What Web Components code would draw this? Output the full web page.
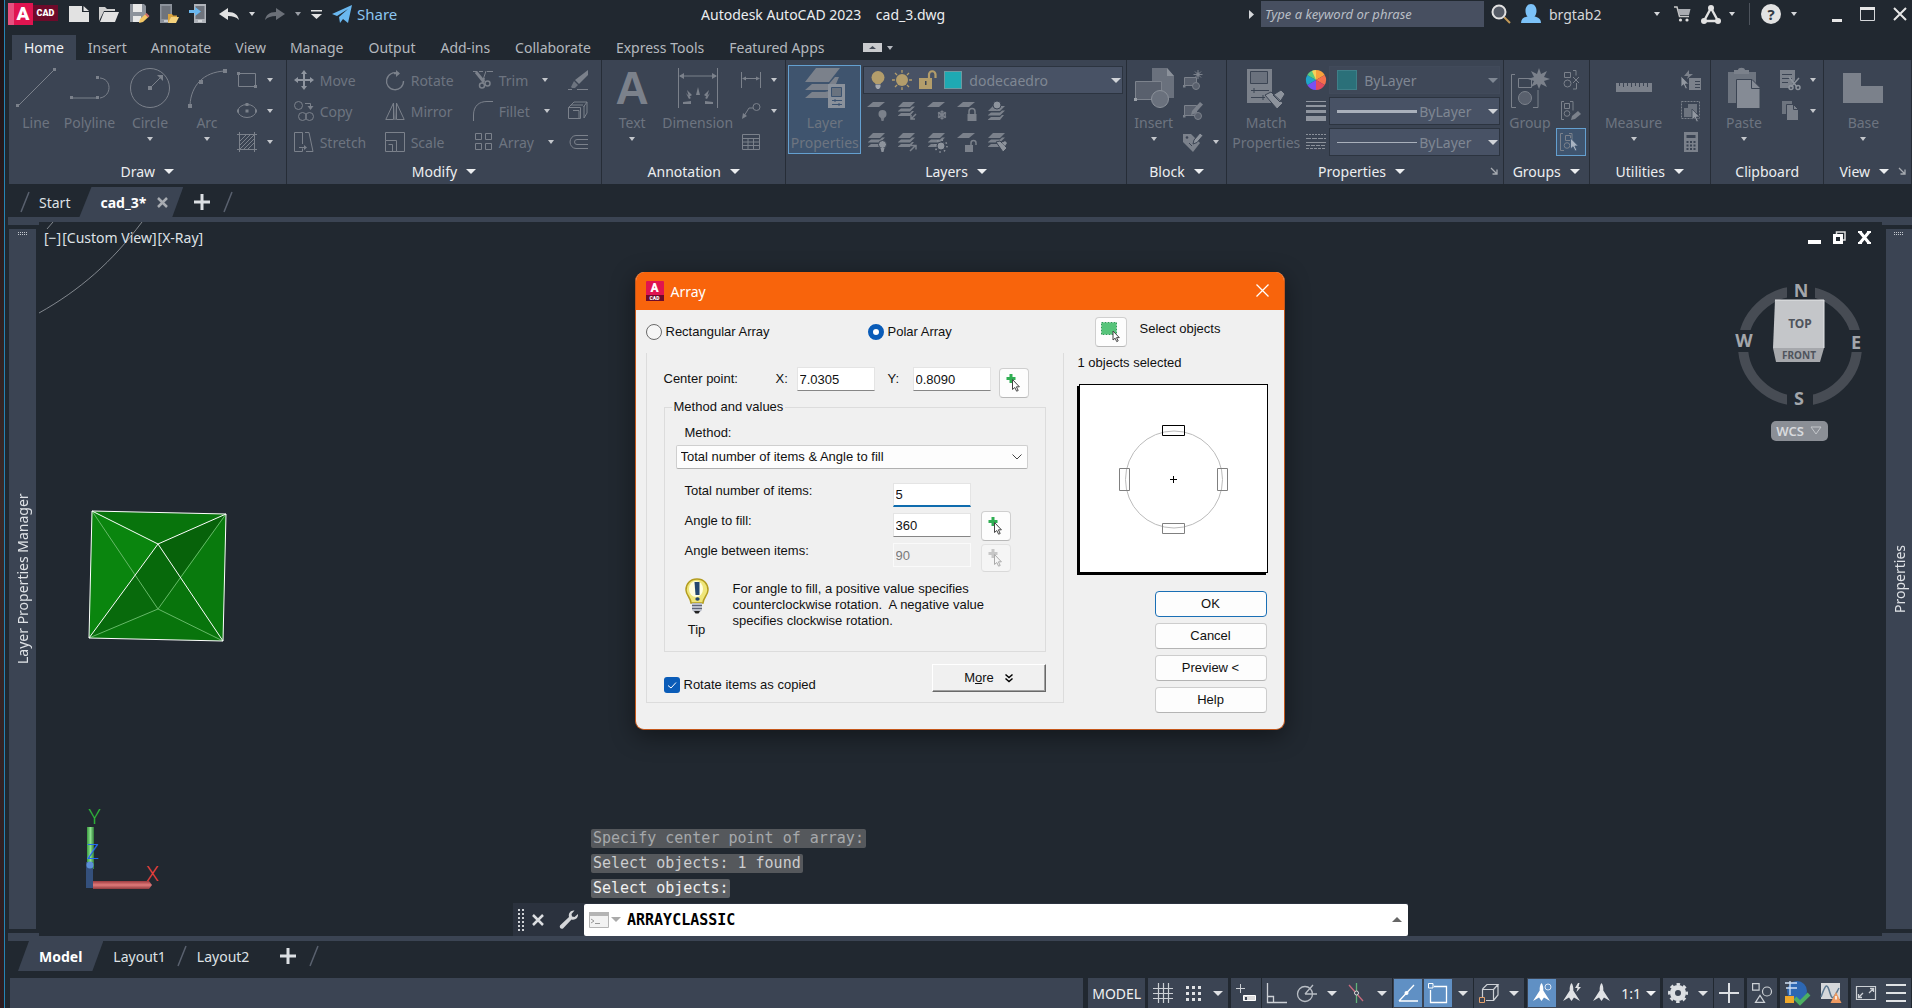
<!DOCTYPE html>
<html lang="en">
<head>
<meta charset="utf-8">
<title>Autodesk AutoCAD 2023 - cad_3.dwg</title>
<style>
  html, body { margin: 0; height: 100%; background: #212830; }
  body { font-family: "Noto Sans", "Open Sans", sans-serif; font-size: 14px; overflow: hidden; }
</style>
</head>
<body>
<cad-app></cad-app>
<script>
const RESET = `
  *, *::before, *::after { box-sizing: border-box; }
  button, input, select { font: inherit; color: inherit; margin: 0; padding: 0; border: 0; background: none; border-radius: 0; }
  button { cursor: default; }
  select { appearance: none; }
  svg { display: block; }
`;

function define(name, css, html, setup) {
  customElements.define(name, class extends HTMLElement {
    constructor() {
      super();
      this.attachShadow({ mode: 'open' });
    }
    connectedCallback() {
      if (this.shadowRoot.childNodes.length) return;
      const body = typeof html === 'function' ? html(this) : html;
      this.shadowRoot.innerHTML = `<style>${RESET}${css}</style>${body}`;
      if (setup) setup(this);
    }
  });
}

/* ---------- icon library: [width, height, markup] ---------- */
const S = (inner, w = 1) => `<g fill="none" stroke="currentColor" stroke-width="${w}">${inner}</g>`;
const F = inner => `<g fill="currentColor">${inner}</g>`;
const sheet = y => `<path d="M6 ${y}h12l-6 5h-12z"/>`;
const stack = F('<path d="M6 1h12l-5 5h-12z"/><path d="M1 10l3-2.500h9l2-2h3l-5 5h-12z"/><path d="M1 14.500l3-2.500h9l2-2h2l-4 5h-12z"/>');
const cursor = (x, y, fill = '#9298a1', stroke = '#3b4453') => `<path transform="translate(${x} ${y})" d="M0 0v11l2.600-2.300 2 4.300 1.800-.8-2-4.200h3.400z" fill="${fill}" stroke="${stroke}" stroke-width=".8"/>`;
const drafter = '<path d="M9.500 0c1.500 2 2 4.500 1.800 7.500L18 18l-6-3.500L9.500 18 7 14.500 1 18 7.700 7.500C7.500 4.500 8 2 9.500 0z"/>';
const ICONS = {
  caret: [6, 4, F('<path d="M0 0h6L3 4z"/>')],
  caretL: [10, 5, F('<path d="M0 0h10L5 5z"/>')],
  caretUp: [10, 5, F('<path d="M0 5h10L5 0z"/>')],
  caretR: [5, 9, F('<path d="M0 0l5 4.500L0 9z"/>')],
  launch: [7, 7, S('<path d="M0 0l6 6M6 1.500V6H1.500" stroke-width="1.300"/>')],
  newf: [20, 16, '<path d="M0 0h13v6h7v10H0z" fill="#e2e2e2"/><path d="M14.500 0L20 5h-5.500z" fill="#e2e2e2"/>'],
  open: [20, 16, '<path d="M0 15V1h6l2 2h8v2H5z" fill="#cfcfcf"/><path d="M5 6h15l-4 10H1z" fill="#e2e2e2"/>'],
  save: [20, 20, '<path d="M1 0h14l2 2v8l-6 8H1z" fill="#8d939c"/><path d="M4 0h9v8H4z" fill="#e8e8e8"/><path d="M4 12h8v6H4z" fill="#e8e8e8"/><path d="M10 19l1-4 6-5.500 3 3-6 5.500z" fill="#f3c766"/><path d="M16 10.500l1.500-1.500 3 3-1.500 1.500z" fill="#c96a6a"/>'],
  saveas: [20, 20, '<path d="M1 0h12v19H1z" fill="#8d939c"/><path d="M2.500 2h9v13h-9z" fill="#6e737c"/><path d="M5 16.500h4v1H5z" fill="#fff"/><path d="M9 10h4l1 1.500h4V13h-6l-2 5H9z" fill="#d9a33f"/><path d="M12 13h8l-3 6H9z" fill="#f5d27c"/>'],
  openweb: [20, 20, '<path d="M5 0h12v19H5z" fill="#b0b4ba"/><path d="M6.500 2h9v13h-9z" fill="#6e737c"/><path d="M9 16.500h4v1H9z" fill="#fff"/><path d="M0 6h6V3l6 4.500-6 4.500V9H0z" fill="#6ab8f0"/>'],
  undo: [20, 14, '<path d="M0 7l9-6v4c7 0 10 3 11 8-3-3-6-4-11-4v4z" fill="#e2e2e2"/>'],
  redo: [20, 14, '<path d="M20 7l-9-6v4C4 5 1 8 0 13c3-3 6-4 11-4v4z" fill="#6b7078"/>'],
  custom: [11, 9, '<path d="M0 0h11v1.500H0zM0 4h11L5.500 9z" fill="#e2e2e2"/>'],
  plane: [20, 18, '<path d="M0 9L20 0l-4 18-5-4-3 4-1-6L16 4 5 11z" fill="#6ab8f0"/>'],
  mag: [20, 20, '<path d="M13 13l6 6" stroke="#c39a58" stroke-width="2"/><circle cx="8" cy="8" r="6.500" fill="#555b66" stroke="#e2e2e2" stroke-width="2"/>'],
  user: [20, 20, '<path d="M0 19c0-4 3-6 6.500-6.500C3 9 4 0 10 0s7 9 3.500 12.500C17 13 20 15 20 19z" fill="#7cc2f8"/>'],
  cart: [17, 17, '<path d="M0 1h3l2.500 9.500H15" fill="none" stroke="#c8c8c8" stroke-width="1.500"/><path d="M4 3h12.500L15 9H5z" fill="#a9acb1"/><circle cx="6.500" cy="14" r="1.600" fill="#ddd"/><circle cx="13" cy="14" r="1.600" fill="#ddd"/>'],
  tri: [20, 19, '<path d="M10 3L3 16h14z" fill="none" stroke="#e2e2e2" stroke-width="2.400"/><circle cx="10" cy="3" r="3" fill="#e2e2e2"/><circle cx="3" cy="16" r="3" fill="#e2e2e2"/><circle cx="17" cy="16" r="3" fill="#e2e2e2"/>'],
  min: [10, 3, '<path d="M0 0h10v3H0z" fill="#e6e6e6"/>'],
  max: [15, 14, '<path d="M.5 1.500h14v12H.5z" fill="none" stroke="#d5d7da"/><path d="M0 0h15v3H0z" fill="#e6e6e6"/>'],
  close: [14, 14, '<path d="M1 1l12 12M13 1L1 13" stroke="#e6e6e6" stroke-width="2"/>'],
  xcmd: [12, 12, '<path d="M1 1l10 10M11 1L1 11" stroke="#dcdee1" stroke-width="2.500"/>'],
  minrib: [19, 9, '<path d="M0 0h19v9H0z" fill="#c9cbce"/><path d="M6 6h7L9.500 3z" fill="#444b57"/>'],
  /* draw */
  line: [40, 40, S('<path d="M3 37L37 3"/>') + F('<path d="M0 36h3v3H0zM37 0h3v3h-3z"/>')],
  pline: [40, 40, S('<path d="M2 30h25M30 10c12 1 12 18 0 20"/>') + F('<path d="M0 28h3v3H0zM26 28h3v3h-3zM26 8h3v3h-3z"/>')],
  circle: [40, 40, S('<circle cx="20" cy="20" r="19.500"/><path d="M20 20L31 9"/>') + F('<path d="M18 18h4v4h-4zM33 7v6l-6-6z"/>')],
  arc: [40, 40, S('<path d="M3 37C4 18 16 4 38 3"/>') + F('<path d="M1 36h4v4H1zM36 1h4v4h-4zM12 12h4v4h-4z"/>')],
  rect: [20, 20, S('<path d="M1.500 3.500h17v13h-17z"/>') + F('<path d="M0 2h3v3H0zM17 15h3v3h-3z"/>')],
  ellipse: [20, 20, S('<ellipse cx="10" cy="10" rx="9" ry="6.500"/>') + F('<path d="M8.500 8.500h3v3h-3zM0 8.500h2v3H0zM18 8.500h2v3h-2zM8.500 2h3v3h-3z"/>')],
  hatch: [20, 20, S('<path d="M2.500 0v20M17.500 0v20M0 2.500h20M0 17.500h20M3 9l6-6M3 13L13 3M3 17L17 3M7 17L17 7M11 17l6-6"/>')],
  /* modify */
  move: [20, 20, `<g color="#9096a0">${F('<path d="M10 0l3 4h-2v5h5V7l4 3-4 3v-2h-5v5h2l-3 4-3-4h2v-5H4v2l-4-3 4-3v2h5V4H7z"/>')}</g>`],
  copy: [20, 20, S('<circle cx="4.500" cy="4.500" r="4"/><circle cx="8.500" cy="15.500" r="4"/><circle cx="15.500" cy="15.500" r="4"/><path d="M11 2.500h5.500V6"/>') + F('<path d="M13.500 5h6l-3 4z"/>')],
  stretch: [20, 20, S('<path d="M8.500 12V.5h-8v19h8v-3M5 15.500h7M11 .5h4l4 19h-7"/>') + F('<path d="M10 13l3 2.500-3 2.500z"/>')],
  rotate: [20, 20, S('<path d="M13 3.300A8.500 8.500 0 1 0 18.500 11M9 3.500h5" stroke-width="1.300"/>') + F('<path d="M11 0l4 3.500-4 3.500z"/>')],
  mirror: [20, 20, S('<path d="M8.500 2v16.500H.8zM11.500 2v16.500h7.700z"/>') + F('<path d="M10 2l1 17H9z" opacity=".6"/>')],
  scale: [20, 20, S('<path d="M.5 8.500V.5h19v19h-8M.5 8.500h11v11H.5zM3.500 12.500h4v7"/>')],
  trim: [20, 20, S('<path d="M0 1.500h4M6 1.500h4M14 1.500h6M10 10l3-9" />') + S('<path d="M3 2l8 10" stroke-width="3"/><circle cx="9" cy="15.500" r="2.500" stroke-width="1.500"/><circle cx="14.500" cy="13.500" r="2.500" stroke-width="1.500"/><path d="M9.500 13L11 8" stroke-width="2"/>')],
  fillet: [20, 20, S('<path d="M.5 20v-6C.5 5 6 .5 14 .5h6"/>')],
  array: [20, 20, S('<path d="M2.500 1.500h6v6h-6zM12.500 1.500h6v6h-6zM2.500 11.500h6v6h-6zM12.500 11.500h6v6h-6z"/>')],
  erase: [20, 20, F('<path d="M20 0v5l-9 9-4-4z"/><path d="M6 11l4 4-3 3H4l-1-1z" opacity=".8"/>') + S('<path d="M0 19.500h4M9 19.500h11"/>')],
  explode: [20, 20, S('<path d="M.5 6.500h12v11H.5zM3 4l3-3h13l-3.500 5M19 1v11l-3 5V5M.5 6.500L3 4h12M5 9.500h6v8"/>')],
  offset: [20, 20, S('<path d="M20 3.500H8a5.500 6 0 0 0 0 13h12M20 7.500H9a2.500 2.500 0 0 0 0 5h11"/>')],
  /* annotation */
  bigA: [40, 40, '<text x="20" y="36" text-anchor="middle" font-family="Liberation Sans, sans-serif" font-weight="700" font-size="46" fill="currentColor">A</text>'],
  dim: [40, 40, S('<path d="M.5 0v40M39.500 0v40M2 8h36"/>') + F('<path d="M1 8l5-3v6zM39 8l-5-3v6zM18 27l2-8 2 8zM11 29l-2-7 5 5zM29 29l2-7-5 5zM5 34l8-1v3H5zM35 34l-8-1v3h8zM8 25l5 5-2 1zM32 25l-5 5 2 1z"/>')],
  dims: [20, 20, S('<path d="M.5 2v16M19.500 2v16M2 8.500h16"/>') + F('<path d="M1 8.500l4-2v4zM19 8.500l-4-2v4z"/>')],
  leader: [20, 20, S('<circle cx="15.500" cy="6" r="3.500"/><path d="M12 7H8l-5 8"/>') + F('<path d="M1 18l1-6 4 3z"/>')],
  table: [20, 20, S('<path d="M1.500 2.500h17v15h-17zM1.500 6.500h17M1.500 10h17M1.500 13.500h17M7 6.500v11M12.500 6.500v11"/>')],
  /* layers */
  bigLayers: [40, 40, F('<path d="M11 0h24L24 14H0z"/><path d="M0 22l7-6h17l6-7h4l-3 7-7 6zM0 30l7-6h13l4-1v7z"/>') + '<path d="M23 16h17v24H23z" fill="#8a919b"/><path d="M26.500 19.500h10v9h-10z" fill="#6a737f" stroke="#3c5370"/><path d="M27 32.500h10M27 36.500h10M30 31v3M34 35v3" stroke="#3c5370"/>'],
  bulb: [14, 20, '<circle cx="7" cy="7.500" r="6.500" fill="#b39d6b"/><path d="M3 11h8l-1.500 3h-5z" fill="#b39d6b"/><path d="M4.500 14.500h5V17L8 19H6l-1.500-2z" fill="#a5a9b0"/>'],
  sun: [20, 20, '<g stroke="#b39d6b" stroke-width="1.300"><path d="M10 0v20M0 10h20M3 3l14 14M17 3L3 17"/></g><circle cx="10" cy="10" r="7.200" fill="#4a5466"/><circle cx="10" cy="10" r="6" fill="#b39d6b"/>'],
  lock: [18, 20, '<path d="M0 8h13v11H0z" fill="#b39d6b"/><path d="M10 9V4.500a3 3 0 0 1 6.500 0V8" fill="none" stroke="#b39d6b" stroke-width="2.200"/><path d="M6 11h1.500v4H6z" fill="#3b4453"/>'],
  lbulb: [20, 20, F(sheet(1)) + F('<circle cx="15.500" cy="13" r="4"/><path d="M13.500 16h4l-1 4h-2z" opacity=".9"/>')],
  lstackin: [20, 20, stack + S('<path d="M19 13l-5 5M14 14v4h4" stroke-width="1.500"/>')],
  lfreeze: [20, 20, F(sheet(1)) + S('<path d="M15 9.500v9M11 11.500l8 5M19 11.500l-8 5" stroke-width="1.500"/><circle cx="15" cy="14" r="3.500"/>')],
  llock: [20, 20, F(sheet(1)) + F('<path d="M10.500 13h9v7h-9z"/>') + S('<path d="M12 13v-2.500a3 3 0 0 1 6 0V13" stroke-width="1.500"/>')],
  lcur: [20, 20, `<g transform="translate(0 4)">${stack}</g>` + '<circle cx="10" cy="4" r="4" fill="#8d939c" stroke="#3b4453"/>'],
  lstackbulb: [20, 20, stack + '<circle cx="15.500" cy="12.500" r="4" fill="#8d939c" stroke="#3b4453"/><path d="M13.500 16h4l-1 4h-2z" fill="#8d939c"/>'],
  lstackout: [20, 20, stack + S('<path d="M13 19l5-5M14 13.500h5v4" stroke-width="1.500"/>')],
  lstacksun: [20, 20, stack + '<circle cx="14" cy="14" r="4" fill="#8d939c" stroke="#3b4453"/><circle cx="14" cy="14" r="6" fill="none" stroke="#8d939c" stroke-width="1.500" stroke-dasharray="1.500 3.200"/>'],
  lunlock: [20, 20, F(sheet(1)) + F('<path d="M8 13h8v7H8z"/>') + S('<path d="M14 13v-2a2.500 2.500 0 0 1 5 0v2" stroke-width="1.500"/>')],
  lmatch: [20, 20, stack + '<path d="M9 10l4-1 7 7-4 4z" fill="#8d939c" stroke="#3b4453"/><path d="M15 11l3-2 2 2-2 3z" fill="#8d939c"/>'],
  /* block */
  insert: [40, 40, '<path d="M18 0h15l7 8v22H18z" fill="#6a717d"/><path d="M33 0v8h7z" fill="#8b919a"/><path d="M1.500 13.500h26v18h-26z" fill="#59606d" stroke="#7d838d"/><circle cx="26" cy="31" r="8.500" fill="#6a717d" stroke="#8b919a"/><path d="M0 30h3v3H0z" fill="#9aa0a8"/>'],
  bcreate: [20, 20, S('<path d="M1.500 7.500h12v8h-12z" fill="#59606d"/><circle cx="13" cy="16" r="3.500" fill="#59606d"/><path d="M15 0v9M10.500 4.500h9M12 1.500l6 6M18 1.500l-6 6"/>') + F('<path d="M0 15h2.500v2.500H0zM15 2l2 2.500-2 2.500-2-2.500z"/>')],
  bedit: [20, 20, S('<path d="M1.500 4.500h12v10h-12z" fill="#59606d"/><circle cx="15" cy="15" r="3.500" fill="#59606d"/>') + F('<path d="M0 14h2.500v2.500H0z"/><path d="M8 14l1-4 8-9 3 2.500-8 9z"/>')],
  battr: [20, 20, F('<path d="M0 2h8l9 9-7 9L0 10z"/>') + '<path d="M10 12l1-4 6-7 3 2.500-6 7z" fill="#8d939c" stroke="#3b4453"/><circle cx="4" cy="5.500" r="1.300" fill="#3b4453"/><path d="M6 11l3 3" stroke="#3b4453"/>'],
  /* properties */
  match: [40, 40, F('<path d="M1 1h25v34H1z"/>') + '<path d="M4.500 3.500h17v12h-17z" fill="#6a717d" stroke="#3b4453"/><path d="M5 22.500h18M5 29.500h14M8 20v5M17 27v5" stroke="#3b4453"/><path d="M19 27l6-3 12 11-6 6zM27 27l8-5 4 4-5 8z" fill="#8d939c" stroke="#3b4453"/>'],
  wheel: [20, 20, '<g><path d="M10 10V0a10 10 0 0 1 8.700 5z" fill="#f8a23c"/><path d="M10 10l8.700-5a10 10 0 0 1 0 10z" fill="#f5704c"/><path d="M10 10l8.700 5A10 10 0 0 1 10 20z" fill="#e2495f"/><path d="M10 10v10a10 10 0 0 1-8.700-5z" fill="#7a4ff0"/><path d="M10 10l-8.700 5a10 10 0 0 1 0-10z" fill="#1fa4c8"/><path d="M10 10L1.300 5A10 10 0 0 1 10 0z" fill="#5ccb7e"/><path d="M10 10L6 .9A10 10 0 0 1 10 0z" fill="#f7d25a"/></g>'],
  lweight: [20, 20, '<path d="M0 0h20v1H0zM0 4h20v2H0zM0 9h20v3H0zM0 15h20v5H0z" fill="#9096a0"/>'],
  ltype: [20, 20, '<g stroke="#8b919a"><path d="M0 2.500h20" stroke-dasharray="2 1"/><path d="M0 6.500h20" stroke-dasharray="5 1"/><path d="M0 10.500h20"/><path d="M0 13.500h20" stroke-dasharray="4 1"/><path d="M0 16.500h20" stroke-dasharray="3 1"/></g>'],
  /* groups */
  group: [40, 40, S('<path d="M5 6.500H1.500v33H6M23 39.500h5V22M8.500 10.500h13v9h-13z" /><circle cx="15" cy="30" r="6.500" fill="#59606d"/>') + F('<path d="M29 0l2 6 6-3-3 6 6 2-6 2 3 6-6-3-2 5-2-5-6 3 3-6-6-2 6-2-3-6 6 3z"/>')],
  ungroup: [20, 20, S('<path d="M3.500 2.500h6v5h-6z"/><circle cx="6.500" cy="13.500" r="3.500"/><path d="M12 .5h3v5M15.500 13v6H12M12 7l6 6M18 7l-6 6"/>')],
  gedit: [20, 20, S('<path d="M3 .5H.5v18H3M9 .5h3v9M3.500 2.500h5v5h-5z"/><circle cx="6" cy="12.500" r="2.800"/>') + F('<path d="M10 19l1-4 6-5 3 3-6 5z"/>')],
  gsel: [20, 20, S('<path d="M3 1.500H.5v17H4M9 1.500h3v9M5.500 3.500h5v5h-5z"/><circle cx="7" cy="13.500" r="2.800"/>') + cursor(10.5, 6, '#a7b3c2', '#3c5370')],
  /* utilities */
  ruler: [40, 40, '<path d="M2 15h36v9H2z" fill="#7b818b"/><path d="M5.500 15v3M9.500 15v4M13.500 15v3M17.500 15v4M21.500 15v3M25.500 15v4M29.500 15v3M33.500 15v4" stroke="#3b4453"/>'],
  qsel: [20, 20, F('<path d="M8 0L3 6h4l-1 3 6-5H8z"/><path d="M8 8h12v12H8z"/>') + '<path d="M14 11.500h5M14 14.500h5M14 17.500h5" stroke="#3b4453"/>' + cursor(0, 6)],
  selall: [20, 20, S('<path d="M.5.500h18v17H.5z" stroke-dasharray="2 1"/>') + F('<path d="M3 7h10v9H3zM7 3h9v9H7z" opacity=".8"/>') + cursor(11, 8)],
  calc: [20, 20, F('<path d="M3 0h14v20H3z"/>') + '<path d="M5.500 3h9v3h-9zM5.500 9h2v2h-2zM9 9h2v2H9zM12.500 9h2v2h-2zM5.500 12.500h2v2h-2zM9 12.500h2v2H9zM12.500 12.500h2v2h-2zM5.500 16h2v2h-2zM9 16h2v2H9zM12.500 16h2v2h-2z" fill="#3b4453"/>'],
  paste: [40, 40, F('<path d="M4 4h28v31H4z" opacity=".8"/><path d="M10 2h4c0-3 7-3 7 0h4v4H10z"/>') + '<path d="M12.500 11.500H28l8 8v21H12.500z" fill="#858b95" stroke="#3b4453"/><path d="M27.500 11.500v9H37" fill="none" stroke="#3b4453"/>'],
  cut: [20, 20, F('<path d="M0 0h15v10l-5 8H0z"/>') + '<path d="M2 4.500h10M2 8.500h10M2 12.500h6" stroke="#3b4453"/>' + '<g fill="none" stroke="#8d939c" stroke-width="1.500"><path d="M9 7l8 10M19 8l-8 9"/><circle cx="11" cy="17.500" r="2"/><circle cx="18" cy="17.500" r="2"/></g>'],
  clip: [20, 20, F('<path d="M2 0h10v13H2z" opacity=".8"/>') + '<path d="M6.500 3.500h7l5 5v11h-12z" fill="#7b818b" stroke="#3b4453"/><path d="M13.500 3.500v5h5" fill="none" stroke="#3b4453"/>'],
  base: [40, 40, F('<path d="M0 5h18v13h22v17H0z"/>')],
  /* file tabs and canvas */
  plus: [16, 16, '<path d="M6.500 0h3v6.500H16v3H9.500V16h-3V9.500H0v-3h6.500z" fill="#dcdfe3"/>'],
  slash: [10, 20, '<path d="M9 0L1 20" stroke="#59616e" stroke-width="1.500"/>'],
  xtab: [11, 11, '<path d="M1 1l9 9M10 1l-9 9" stroke="#a7abb1" stroke-width="2.500"/>'],
  wmin: [13, 13, '<path d="M0 9h13v4H0z" fill="#fff"/>'],
  wrest: [13, 13, '<path d="M3.500 3V1h8.500v8h-2" fill="none" stroke="#ddd" stroke-width="1.500"/><path d="M1.500 4.500h7v7h-7z" fill="none" stroke="#fff" stroke-width="3"/>'],
  wclose: [13, 13, '<path d="M2 1l9 11M11 1L2 12" stroke="#fff" stroke-width="3"/><path d="M0 1h4M9 1h4M0 12h4M9 12h4" stroke="#fff" stroke-width="2"/>'],
  wrench: [19, 19, '<path d="M1 15.500L10 7c-1-4 2-7 5.500-6.500L12.500 4l.5 2.500 2.500.5L19 4c.5 4-3 6.500-6.500 5.500L4 18.500c-2 1-4-1-3-3z" fill="#d5d7da"/>'],
  cmd: [20, 16, '<path d="M.5.500h19v15H.5z" fill="#f2f2f2" stroke="#b4b4b4"/><path d="M0 0h20v4H0z" fill="#b4b4b4"/><path d="M2 7l3 2-3 2M6 11.500h5" stroke="#999" fill="none"/>'],
  grip: [6, 22, '<path d="M1 0v22M5 0v22" stroke="#cfd2d6" stroke-width="2" stroke-dasharray="2 2"/>'],
  hgrip: [10, 4, '<path d="M0 .5h10M0 2.500h10" stroke="#c4c8ce" stroke-dasharray="1 1"/>'],
  /* status bar */
  grid: [20, 20, '<path d="M5.500 0v20M10.500 0v20M15.500 0v20M0 5.500h20M0 10.500h20M0 15.500h20" stroke="#ccd0d5" stroke-width="1.200"/>'],
  snap: [20, 20, '<path d="M3 4.500h16M3 10.500h16M3 16.500h16" stroke="#e0e2e5" stroke-width="3" stroke-dasharray="3 3"/>'],
  dyn: [20, 20, '<path d="M4.500 1v9M0 5.500h9" stroke="#ccd0d5"/><path d="M7.500 12.500h12v5h-12z" fill="#ddd" stroke="#fff"/><path d="M9 14h2v3H9z" fill="#3b4453"/>'],
  ortho: [20, 20, '<path d="M.5 0v19.500H20M.5 13.500h6v6" fill="none" stroke="#ccd0d5" stroke-width="1.300"/>'],
  polar: [20, 20, '<circle cx="8" cy="11" r="7.500" fill="none" stroke="#b9bec5" stroke-width="1.300"/><path d="M8 11h12M8 11L16 2" stroke="#b9bec5" stroke-width="1.300"/>'],
  iso: [20, 20, '<path d="M2 2l14 16" stroke="#c76a7d" stroke-width="1.300"/><path d="M9.500 0v20" stroke="#61b279" stroke-width="1.300"/><circle cx="9.500" cy="10" r="2" fill="#3b4453" stroke="#ddd"/>'],
  track: [20, 20, '<path d="M1 18h19M1 18L16 2" stroke="#fff" stroke-width="1.300"/><circle cx="8.500" cy="10" r="2" fill="#fff"/>'],
  osnap: [20, 20, '<path d="M6 3.500h12.500v16h-16V7" fill="none" stroke="#fff" stroke-width="1.300"/><path d="M.5.500h4.500v4.500H.5z" fill="none" stroke="#fff"/>'],
  cube: [20, 20, '<path d="M3.500 14V6.500h11v11H7M3.500 6L8 1.500h11l-4.500 5M19 1.500V12l-4.500 5.500" fill="none" stroke="#ccd0d5" stroke-width="1.200"/><path d="M.5 14.500h5v5h-5z" fill="#3b4453" stroke="#e2a06c"/>'],
  ann1: [20, 20, `<g fill="#fff">${drafter}</g><circle cx="16" cy="4" r="3" fill="none" stroke="#dfe8f5"/>`],
  ann2: [20, 20, `<g fill="#e0e2e5">${drafter}<path d="M16 0l-3 5h2.500l-1 4L19 4h-2.500l1-4z"/></g>`],
  ann3: [20, 20, `<g fill="#e0e2e5">${drafter}</g>`],
  gear: [20, 20, '<circle cx="10" cy="10" r="5.500" fill="none" stroke="#dcdfe3" stroke-width="5"/><circle cx="10" cy="10" r="8.700" fill="none" stroke="#dcdfe3" stroke-width="2.600" stroke-dasharray="3.500 3.330" stroke-dashoffset="1.700"/>'],
  splus: [20, 20, '<path d="M10 0v20M0 10h20" stroke="#dcdfe3" stroke-width="2"/>'],
  shapes: [20, 20, '<g fill="none" stroke="#ccd0d5" stroke-width="1.200"><path d="M.6.600h6.500v6.500H.6zM3.500 19.400l4.500-7 4.500 7z"/><circle cx="15" cy="8.500" r="4.500"/></g>'],
  globe: [24, 24, '<circle cx="12" cy="10" r="10" fill="#2d67b2"/><path d="M0 2h12M5 0v14M1 7h11" stroke="#cfe0f5" stroke-width="1.300"/><path d="M0 15h9v7H0z" fill="#f0a92c"/><path d="M10 17l5 5 9-9" fill="none" stroke="#4caf62" stroke-width="4"/>'],
  perf: [20, 20, '<path d="M0 0h19v16H0z" fill="#d5d7da"/><path d="M0 14c5-14 6-14 9-4s5 2 9-5" fill="none" stroke="#5c7890" stroke-width="1.500"/><path d="M15 9l5.500 11h-11z" fill="#ef9a62"/><path d="M15 13v3.500" stroke="#fff" stroke-width="1.500"/>'],
  clean: [20, 20, '<path d="M.5 3.500h19v13H.5z" fill="none" stroke="#ccd0d5" stroke-width="1.200"/><path d="M13 10l4-4M14 5.500h3.500V9M7 10l-4 4M2.500 11v3.500H6" fill="none" stroke="#ccd0d5" stroke-width="1.300"/>'],
  menu: [20, 20, '<path d="M0 2h20M0 10h20M0 18h20" stroke="#e0e2e5" stroke-width="2"/>'],
  /* dialog */
  pick: [16, 18, '<path d="M5 0v9M.5 4.500h9" stroke="#2fae52" stroke-width="3"/>' + '<g transform="translate(6.500 5.500)"><path d="M0 0v10l2.300-2 1.800 3.700 1.600-.7-1.800-3.700h3z" fill="#fff" stroke="#444"/></g>'],
  pickobj: [20, 20, '<path d="M1 1h14v11H1z" fill="#57c47a"/><path d="M.5.500h15v12H.5z" fill="none" stroke="#2f9c56" stroke-dasharray="2 1"/>' + '<g transform="translate(12 9)"><path d="M0 0v9l2.100-1.800 1.600 3.400 1.500-.7-1.700-3.300h2.800z" fill="#fff" stroke="#444"/></g>'],
  dclose: [13, 13, '<path d="M.5.500l12 12M12.500.500l-12 12" stroke="#fff" stroke-width="1.300"/>'],
  chev: [10, 6, '<path d="M.5.500L5 5 9.500.500" fill="none" stroke="#444"/>'],
  more: [8, 8, '<path d="M.5.500L4 3.500 7.500.500M.5 4.500L4 7.500 7.500 4.500" fill="none" stroke="#000" stroke-width="1.500"/>'],
  tip: [24, 36, '<path d="M12 1C5 1 1 6 1 12c0 5 5 8 5 13h12c0-5 5-8 5-13 0-6-4-11-11-11z" fill="#efe67a" stroke="#b39c20" stroke-width="1.500"/><ellipse cx="11" cy="11" rx="7" ry="8" fill="#fffde0"/><path d="M9.500 4h5v13h-4z" fill="#24476e"/><ellipse cx="12.500" cy="21" rx="2.200" ry="1.800" fill="#24476e"/><path d="M7 25h10v7l-3 3h-4l-3-3z" fill="#b8bcc8"/><path d="M7 27.500h10M7 30.500h10" stroke="#5e6478"/><path d="M9 33h6l-1.500 2.500h-3z" fill="#222"/>']
};
define('cad-icon', ':host{display:inline-flex;flex:none} svg{overflow:visible}', el => {
  const [w, h, m] = ICONS[el.getAttribute('name')];
  return `<svg width="${w}" height="${h}" viewBox="0 0 ${w} ${h}" aria-hidden="true">${m}</svg>`;
});
const ic = n => `<cad-icon name="${n}"></cad-icon>`;

/* ---------- title bar ---------- */
define('product-badge', `
  :host { display: flex; width: 50px; height: 22px; font-family: Roboto, sans-serif; font-weight: 900; color: #fff; }
  .a { width: 25px; background: linear-gradient(90deg, #e8507f 0 6px, #e01450 6px); font-size: 19px; line-height: 21px; text-align: center; padding-left: 5px; }
  .c { flex: 1; margin: 2px 0 4px; background: #6e0a2a; font-size: 9px; line-height: 16px; text-align: center; }
`, '<span class="a">A</span><span class="c">CAD</span>');

define('title-bar', `
  :host { display: flex; height: 28px; align-items: center; padding: 0 5px 0 3px; color: #d5d7da; }
  button { display: flex; align-items: center; justify-content: center; height: 24px; }
  .quick { display: flex; align-items: center; gap: 10px; margin-left: 11px; }
  .quick button { min-width: 20px; }
  .quick .c { min-width: 6px; }
  .share { gap: 5px; color: #8cc6f2; font-size: 15px; }
  h1 { flex: 1; margin: 0; text-align: center; font-size: 14px; font-weight: 400; color: #eceef0; white-space: pre; }
  .find { display: flex; align-items: center; gap: 7px; }
  input { width: 223px; height: 26px; padding: 0 4px; background: #474f60; font-size: 13px; font-style: italic; }
  input::placeholder { color: #b9bec5; opacity: 1; }
  .acct { display: flex; align-items: center; margin-left: 10px; }
  .user { gap: 8px; width: 139px; justify-content: flex-start; }
  .user cad-icon:last-child { margin-left: auto; }
  .cart { margin-left: 14px; } .hub { margin-left: 10px; gap: 8px; }
  hr { width: 1px; height: 22px; margin: 0 11px 0 14px; border: 0; background: #4d535c; }
  .help { gap: 10px; }
  .q { width: 20px; height: 20px; border-radius: 50%; background: #e2e2e2; color: #333a44; font-weight: 700; font-size: 15px; line-height: 20px; }
  .win { display: flex; margin-left: 35px; gap: 18px; }
  .win button:first-child { align-items: flex-end; padding-bottom: 4px; }
`, `
  <product-badge></product-badge>
  <div class="quick">
    ${['newf','open','save','saveas','openweb','undo'].map(n => `<button aria-label="${n}">${ic(n)}</button>`).join('')}
    <button class="c" aria-label="Undo list">${ic('caret')}</button>
    <button aria-label="Redo">${ic('redo')}</button>
    <button class="c" aria-label="Redo list" style="color:#9a9ea5">${ic('caret')}</button>
    <button class="c" aria-label="Customize">${ic('custom')}</button>
    <button class="share">${ic('plane')}Share</button>
  </div>
  <h1>Autodesk AutoCAD 2023    cad_3.dwg</h1>
  <div class="find">${ic('caretR')}<input aria-label="Search" placeholder="Type a keyword or phrase"><button aria-label="Find">${ic('mag')}</button></div>
  <div class="acct">
    <button class="user">${ic('user')}brgtab2${ic('caret')}</button>
    <button class="cart" aria-label="Store">${ic('cart')}</button>
    <button class="hub" aria-label="Apps">${ic('tri')}${ic('caret')}</button>
    <hr>
    <button class="help"><span class="q">?</span>${ic('caret')}</button>
  </div>
  <div class="win"><button aria-label="Minimize">${ic('min')}</button><button aria-label="Maximize">${ic('max')}</button><button aria-label="Close">${ic('close')}</button></div>
`);

define('ribbon-tabs', `
  :host { display: flex; height: 25px; margin-top: 7px; padding-left: 7px; color: #b4b8be; }
  button { padding: 0 12px; line-height: 25px; font-size: 14px; display: flex; align-items: center; gap: 5px; }
  button:nth-of-type(n+5) { padding-right: 13px; }
  [aria-selected=true] { background: #3b4453; color: #f1f2f4; }
  .m { margin-left: 14px; }
`, `${['Home','Insert','Annotate','View','Manage','Output','Add-ins','Collaborate','Express Tools','Featured Apps'].map((t, i) => `<button role="tab" aria-selected="${i === 0}">${t}</button>`).join('')}
  <button class="m" aria-label="Minimize ribbon">${ic('minrib')}${ic('caret')}</button>`);

/* ---------- ribbon parts ---------- */
define('tool-big', `
  :host { display: block; width: var(--w, 56px); height: 90px; flex: none; }
  button { width: 100%; height: 89px; padding-top: 3px; display: flex; flex-direction: column; align-items: center; color: #7b818b; }
  .l { margin-top: 5px; line-height: 20px; color: #6d7480; white-space: pre; text-align: center; }
  .c { margin-top: 4px; color: #c4c7cc; display: flex; }
  :host([active]) button { background: #3f546e; box-shadow: inset 0 0 0 1px #64a0d0; }
`, el => `<button>${ic(el.getAttribute('icon'))}<span class="l">${el.getAttribute('label')}</span>${el.hasAttribute('caret') ? `<span class="c">${ic('caret')}</span>` : ''}</button>`);

define('tool-small', `
  :host { display: flex; height: 30px; }
  button { display: flex; align-items: center; color: #7b818b; height: 30px; }
  .l { color: #6d7480; margin-left: 6px; }
  .c { color: #c4c7cc; margin-left: 10px; display: flex; }
  .l + .c { margin-left: 14px; }
  :host([active]) button { background: #3f546e; box-shadow: inset 0 0 0 1px #64a0d0; padding: 0 4px; height: 28px; margin: 1px -5px; width: 30px; }
`, el => `<button aria-label="${el.getAttribute('label') || el.getAttribute('icon')}">${ic(el.getAttribute('icon'))}${el.hasAttribute('label') ? `<span class="l">${el.getAttribute('label')}</span>` : ''}${el.hasAttribute('caret') ? `<span class="c">${ic('caret')}</span>` : ''}</button>`);

define('tool-combo', `
  :host { display: flex; align-items: center; height: 28px; margin: 1px 0; padding: 0 1px 0 7px; background: #485265; border: 1px solid #2c3440; color: #7f8793; gap: 7px; }
  :host([flat]) { background: #3f4858; border-color: #414a5a; }
  select { flex: 1; min-width: 0; height: 24px; outline: 0; }
  .c { color: #d0d3d8; display: flex; }
  :host([flat]) .c { color: #7f8793; }
`, el => `<slot></slot><select aria-label="${el.getAttribute('label')}"><option>${el.getAttribute('value')}</option></select><span class="c">${ic('caretL')}</span>`);

define('ribbon-panel', `
  :host { display: flex; flex-direction: column; min-width: 0; height: 124px; border-right: 1px solid #262d37; padding-top: 5px; }
  .body { display: flex; height: 94px; padding-left: var(--pad, 4px); }
  .foot { display: flex; align-items: center; height: 25px; padding: 0 5px; }
  .t { flex: 1; display: flex; align-items: center; justify-content: center; gap: 9px; color: #eceef0; line-height: 20px; }
  .launch { color: #a7abb1; display: flex; }
`, el => `<div class="body"><slot></slot></div><div class="foot"><button class="t">${el.getAttribute('label')}${el.hasAttribute('plain') ? '' : ic('caretL')}</button>${el.hasAttribute('launcher') ? `<button class="launch" aria-label="Options">${ic('launch')}</button>` : ''}</div>`);

const big = (i, l, w, o = '') => `<tool-big icon="${i}" label="${l}" style="--w:${w}px" ${o}></tool-big>`;
const sm = (i, l, o = '') => `<tool-small icon="${i}" ${l ? `label="${l}"` : ''} ${o}></tool-small>`;
const grow = (n, pad) => `style="flex:${n} ${n} 0px;--pad:${pad}px"`;
define('cad-ribbon', `
  :host { display: flex; margin-left: 4px; background: #3b4453; }
  .g { display: grid; grid-auto-rows: 30px; row-gap: 1px; align-content: start; }
  .mod { grid-template-columns: 91px 88px 95px 20px; }
  .lay { flex: 1; min-width: 0; margin: 0 3px 0 2px; }
  .row { display: flex; gap: 10px; padding-left: 4px; }
  .sw { width: 18px; height: 18px; background: #1fa9b3; border: 1px solid #6f98a0; }
  .sw.d { width: 20px; height: 20px; background: #2b7079; border-color: #3f7f88; }
  .ln { width: 80px; background: #a9b0bb; height: 1px; margin-right: -5px; }
  .ln.w { height: 3px; }
  .prop { flex: 1; min-width: 0; margin: 0 3px 0 3px; }
`, `
  <ribbon-panel label="Draw" ${grow(278, 2)}>
    ${big('line','Line',50)}${big('pline','Polyline',57)}${big('circle','Circle',64,'caret')}${big('arc','Arc',50,'caret')}
    <div class="g" style="margin-left:5px">${sm('rect','','caret')}${sm('ellipse','','caret')}${sm('hatch','','caret')}</div>
  </ribbon-panel>
  <ribbon-panel label="Modify" ${grow(316, 7)}>
    <div class="g mod">${sm('move','Move')}${sm('rotate','Rotate')}${sm('trim','Trim','caret')}${sm('erase')}
    ${sm('copy','Copy')}${sm('mirror','Mirror')}${sm('fillet','Fillet','caret')}${sm('explode')}
    ${sm('stretch','Stretch')}${sm('scale','Scale')}${sm('array','Array','caret')}${sm('offset')}</div>
  </ribbon-panel>
  <ribbon-panel label="Annotation" ${grow(184, 8)}>
    ${big('bigA','Text',44,'caret')}${big('dim','Dimension',87)}
    <div class="g">${sm('dims','','caret')}${sm('leader','','caret')}${sm('table')}</div>
  </ribbon-panel>
  <ribbon-panel label="Layers" ${grow(341, 2)}>
    ${big('bigLayers','Layer\nProperties',73,'active')}
    <div class="g lay">
      <tool-combo label="Layer" value="dodecaedro">${ic('bulb')}${ic('sun')}${ic('lock')}<span class="sw"></span></tool-combo>
      <div class="row">${['lbulb','lstackin','lfreeze','llock','lcur'].map(n => sm(n)).join('')}</div>
      <div class="row">${['lstackbulb','lstackout','lstacksun','lunlock','lmatch'].map(n => sm(n)).join('')}</div>
    </div>
  </ribbon-panel>
  <ribbon-panel label="Block" ${grow(100, 3)}>
    ${big('insert','Insert',48,'caret')}
    <div class="g" style="margin-left:5px">${sm('bcreate')}${sm('bedit')}${sm('battr','','caret')}</div>
  </ribbon-panel>
  <ribbon-panel label="Properties" launcher ${grow(277, 2)}>
    ${big('match','Match\nProperties',74)}
    <div class="g" style="margin-left:3px">${sm('wheel')}${sm('lweight')}${sm('ltype')}</div>
    <div class="g prop">
      <tool-combo flat label="Object color" value="ByLayer"><span class="sw d"></span></tool-combo>
      <tool-combo label="Lineweight" value="ByLayer"><span class="ln w"></span></tool-combo>
      <tool-combo label="Linetype" value="ByLayer"><span class="ln"></span></tool-combo>
    </div>
  </ribbon-panel>
  <ribbon-panel label="Groups" ${grow(85, 1)}>
    ${big('group','Group',50)}
    <div class="g" style="margin-left:6px">${sm('ungroup')}${sm('gedit')}${sm('gsel','','active')}</div>
  </ribbon-panel>
  <ribbon-panel label="Utilities" ${grow(121, 14)}>
    ${big('ruler','Measure',60,'caret')}
    <div class="g" style="margin-left:17px">${sm('qsel')}${sm('selall')}${sm('calc')}</div>
  </ribbon-panel>
  <ribbon-panel label="Clipboard" plain ${grow(113, 8)}>
    ${big('paste','Paste',50,'caret')}
    <div class="g" style="margin-left:11px">${sm('cut','','caret')}${sm('clip','','caret')}</div>
  </ribbon-panel>
  <ribbon-panel label="View" launcher ${grow(87, 11)}>
    ${big('base','Base',56,'caret')}
  </ribbon-panel>
`);

/* ---------- file tabs ---------- */
define('file-tabs', `
  :host { display: flex; align-items: center; height: 30px; margin-top: 3px; padding-left: 15px; color: #dfe2e6; }
  button { display: flex; align-items: center; height: 30px; }
  .start { margin: 0 9px; }
  .act { gap: 11px; padding: 0 15px 0 21px; margin-right: 11px; background: #3b4453; clip-path: polygon(12px 0, 100% 0, calc(100% - 11px) 100%, 0 100%); font-weight: 700; color: #fff; }
  .add { margin-right: 13px; }
`, `${ic('slash')}<button class="start">Start</button><button class="act">cad_3*${ic('xtab')}</button><button class="add" aria-label="New drawing">${ic('plus')}</button>${ic('slash')}`);

define('side-palette', `
  :host { display: flex; flex-direction: column; align-items: center; background: #3b4453; color: #dfe2e6; }
  .g { display: flex; padding-top: 3px; height: 10px; }
  button { flex: 1; writing-mode: vertical-rl; transform: rotate(180deg); margin-bottom: 10px; }
`, el => `<span class="g">${ic('hgrip')}</span><button>${el.getAttribute('label')}</button>`);

/* ---------- drawing area ---------- */
define('view-cube', ':host{display:block;position:absolute;top:54px;right:16px}', `
  <svg width="132" height="170" viewBox="0 0 132 170" font-family="Noto Sans, sans-serif">
    <ellipse cx="66" cy="70" rx="57" ry="55" fill="none" stroke="#474c54" stroke-width="10"/>
    <g fill="#212830"><path d="M53 4h28v20H53zM53 112h26v22H53zM0 54h20v22H0zM112 54h20v22h-20z"/></g>
    <g fill="#a3a6ab" font-weight="700" font-size="18" text-anchor="middle"><text x="67" y="21">N</text><text x="65" y="129">S</text><text x="10" y="71">W</text><text x="122" y="73">E</text></g>
    <path d="M41 24h49v48H39z" fill="#c4c6c9"/>
    <path d="M41 24h49v48" fill="none" stroke="#e4e5e7"/>
    <path d="M39 72h51l-4 14H42z" fill="#a6a8ac"/>
    <text x="66" y="52" font-size="12" font-weight="700" fill="#4f545c" text-anchor="middle">TOP</text>
    <text x="65" y="83" font-size="10" font-weight="700" fill="#4f545c" text-anchor="middle">FRONT</text>
    <rect x="37" y="145" width="57" height="20" rx="5" fill="#8b8f96"/>
    <text x="56" y="160" font-size="13" font-weight="600" fill="#d8dadd" text-anchor="middle">WCS</text>
    <path d="M77 151h10l-5 7z" fill="none" stroke="#c3c6ca"/>
  </svg>`);

define('drawing-scene', ':host{display:block;position:absolute;left:0;top:0}', `
  <svg width="300" height="714" viewBox="39 222 300 714">
    <g fill="none" stroke="#9a9fa6" stroke-width=".8"><path d="M39 313C80 290 112 262 142 222M47 229l6-7"/></g>
    <path d="M92 511L226 514 223 641 89 638z" fill="#08740c"/>
    <path d="M92 511L158 544 89 638z" fill="#0a850e"/>
    <path d="M92 511L158 544 135 575z" fill="#0a850e"/>
    <path d="M158 544L226 514 180 577z" fill="#07620a"/>
    <path d="M158 544L180 577 158 609 135 575z" fill="#07690b"/>
    <path d="M135 575L158 609 89 638z" fill="#086a0c"/>
    <path d="M226 514L223 641 180 577z" fill="#097a0d"/>
    <path d="M92 511L158 609 226 514M89 638L158 609 223 641" fill="none" stroke="#66b968"/>
    <path d="M92 511L226 514 223 641 89 638zL158 544 226 514M89 638L158 544 223 641" fill="none" stroke="#fff"/>
    <defs>
      <linearGradient id="gy"><stop stop-color="#3b9c40"/><stop offset=".5" stop-color="#8be08c"/><stop offset="1" stop-color="#2f7a38"/></linearGradient>
      <linearGradient id="gx" x2="0" y2="1"><stop stop-color="#9c3a3f"/><stop offset=".5" stop-color="#e07a7a"/><stop offset="1" stop-color="#8f3a3e"/></linearGradient>
    </defs>
    <path d="M87 827h7v42h-7z" fill="url(#gy)"/>
    <path d="M86 862h7v26h-7z" fill="#34507c"/><circle cx="90" cy="865" r="3.500" fill="#5c8fd6"/>
    <path d="M93 881h56l3 4-3 4H93z" fill="url(#gx)"/>
    <g font-family="Roboto, sans-serif" font-weight="300" font-size="21" text-anchor="middle"><text x="94.500" y="824" fill="#2fb83a">Y</text><text x="93" y="859" fill="#2468f0">Z</text><text x="152.500" y="881" fill="#e8403c">X</text></g>
  </svg>`);

define('command-line', `
  :host { display: block; width: 895px; max-width: 100%; font-family: "DejaVu Sans Mono", monospace; font-size: 15px; }
  .h { margin-left: 78px; display: flex; flex-direction: column; align-items: flex-start; gap: 6px; margin-bottom: 5px; }
  .h span { height: 19px; line-height: 19px; padding: 0 2px; border-radius: 2px; background: #55585c; color: #a6a8ab; }
  .h span:nth-child(2) { color: #cccdcf; } .h span:nth-child(3) { color: #f0f0f0; background: #5c5f63; }
  .bar { display: flex; align-items: center; height: 33px; background: #2b323e; }
  .bar button { display: flex; }
  .x { margin: 0 15px 0 8px; } .grip { margin-left: 5px; display: flex; }
  label { flex: 1; height: 32px; margin-left: 6px; display: flex; align-items: center; background: #fff; border-radius: 2px; padding: 0 6px 0 5px; color: #aaa; gap: 2px; }
  input { flex: 1; color: #000; font-weight: 700; margin-left: 4px; outline: 0; }
  .u { color: #666; }
`, `<div class="h"><span>Specify center point of array:</span><span>Select objects: 1 found</span><span>Select objects:</span></div>
  <div class="bar"><span class="grip">${ic('grip')}</span><button class="x" aria-label="Close">${ic('xcmd')}</button><button aria-label="Customize">${ic('wrench')}</button>
  <label>${ic('cmd')}${ic('caretL')}<input aria-label="Command" value="ARRAYCLASSIC"><button class="u" aria-label="History">${ic('caretUp')}</button></label></div>`);

define('drawing-area', `
  :host { display: flex; flex-direction: column; align-items: center; position: relative; min-width: 0; overflow: hidden; color: #dfe2e6; }
  .top { align-self: stretch; display: flex; justify-content: space-between; align-items: center; height: 30px; padding: 0 11px 0 5px; z-index: 1; }
  .top div { display: flex; gap: 12px; }
  .top button { display: flex; }
  .top .vp { gap: 1px; }
  command-line { margin-top: auto; }
`, `<drawing-scene></drawing-scene>
  <div class="top"><div class="vp"><button>[−]</button><button>[Custom View]</button><button>[X-Ray]</button></div>
  <div><button aria-label="Minimize">${ic('wmin')}</button><button aria-label="Restore">${ic('wrest')}</button><button aria-label="Close">${ic('wclose')}</button></div></div>
  <view-cube></view-cube><array-dialog></array-dialog><command-line></command-line>`);

/* ---------- Array dialog ---------- */
define('pick-button', `
  :host { display: block; }
  button { width: var(--w, 30px); height: 30px; display: flex; align-items: center; justify-content: center; background: #fdfdfd; border: 1px solid #cfcfcf; border-bottom-color: #b8b8b8; border-radius: 4px; }
  button:disabled { opacity: .4; filter: grayscale(1); height: 28px; }
`, el => `<button ${el.hasAttribute('disabled') ? 'disabled' : ''} aria-label="${el.getAttribute('label')}">${ic(el.getAttribute('icon') || 'pick')}</button>`);

define('array-preview', `
  :host { display: block; margin-left: 3px; width: 189px; height: 189px; background: #fff; border: 1px solid #000; box-shadow: -2px 2px 0 #000; }
`, `<svg width="187" height="187" viewBox="0 0 187 187" fill="none"><circle cx="94" cy="94.500" r="48.500" stroke="#bbb"/><path d="M82.500 40.500h22v10h-22z" stroke="#000"/><path d="M82.500 138.500h22v10h-22zM39.500 83.500h10v22h-10zM137.500 83.500h10v22h-10z" stroke="#808080"/><path d="M90 94.500h7M93.500 91v7" stroke="#000"/></svg>`);

define('array-dialog', `
  :host { display: block; position: absolute; z-index: 2; top: 50px; left: 50%; width: 650px; margin-left: -326px; background: #f0f0f0; border: 1px solid #c4571b; border-top: 0; border-radius: 9px; overflow: hidden; color: #111; font-family: "Liberation Sans", Arial, sans-serif; font-size: 13px; line-height: 16px; box-shadow: 0 6px 24px rgba(0,0,0,.45); }
  header { display: flex; align-items: center; gap: 7px; height: 38px; padding: 0 15px 0 10px; background: #f8640c; color: #fff; font: 14px "Noto Sans", sans-serif; }
  header h2 { flex: 1; margin: 0; font: inherit; }
  .logo { width: 18px; height: 20px; background: #e01450; border-radius: 1px; display: flex; flex-direction: column; align-items: center; font-family: Roboto, sans-serif; font-weight: 900; }
  .logo b { font-size: 12px; line-height: 14px; } .logo i { align-self: stretch; background: #6e0a2a; font: 900 5px/6px Roboto, sans-serif; text-align: center; }
  .body { display: flex; justify-content: space-between; padding: 7px 16px 16px 10px; }
  .left { width: 418px; }
  .radios { display: grid; grid-template-columns: 222px 1fr; padding-top: 7px; height: 36px; }
  label.r { display: flex; align-items: center; gap: 4px; height: 16px; }
  input[type=radio], input[type=checkbox] { appearance: none; width: 16px; height: 16px; border: 1px solid #6a6a6a; border-radius: 50%; background: #f6f6f6; }
  input[type=radio]:checked { border: 5px solid #0a5cb8; background: #fff; }
  input[type=checkbox] { border: 0; border-radius: 3px; background: #0a5cb8 url("data:image/svg+xml,%3Csvg xmlns='http://www.w3.org/2000/svg' viewBox='0 0 16 16'%3E%3Cpath d='M4 8.500l3 2.500 5-5.500' fill='none' stroke='white'/%3E%3C/svg%3E"); }
  .box { border: 1px solid #dcdcdc; border-top: 0; height: 350px; padding: 14px 17px 0; }
  .center { display: flex; }
  .center label { line-height: 23px; }
  .center .cp { width: 112px; line-height: 23px; }
  .center .x { width: 21px; } .center .y { width: 25px; margin-left: 13px; }
  .center pick-button { margin: 1px 0 0 8px; }
  .f { width: 78px; height: 24px; padding: 0 2px; background: #fff; border: 1px solid #e4e4e4; border-bottom: 1px solid #868686; outline: 0; }
  .f.on { border-bottom: 2px solid #0f6cae; } .f:disabled { background: #f0f0f0; border-color: #fafafa; color: #7a7a7a; }
  fieldset { margin: 1px 0 0; border: 1px solid #dcdcdc; padding: 10px 17px 0 11px; height: 253px; }
  legend { margin-left: -4px; padding: 0 2px; }
  .ml { display: block; margin-left: 9px; }
  .sel { display: flex; align-items: center; height: 24px; margin-top: 4px; padding: 0 5px 0 4px; background: #fdfdfd; border: 1px solid #cfcfcf; border-bottom-color: #b0b0b0; border-radius: 2px; }
  .sel select { flex: 1; outline: 0; }
  .vals { display: grid; grid-template-columns: 208px 78px 30px; column-gap: 0; grid-auto-rows: 30px; margin: 14px 0 0 9px; align-items: start; }
  .vals pick-button { margin: -2px 0 0 10px; } .vals pick-button[disabled] { margin-top: 1px; }
  .tip { display: flex; margin: 5px 0 0 9px; gap: 24px; }
  .tip div { display: flex; flex-direction: column; align-items: center; gap: 8px; }
  .tip p { margin: 3px 0 0; white-space: pre; }
  .foot { display: flex; justify-content: space-between; align-items: flex-start; margin-top: 12px; }
  .foot label { margin-top: 13px; }
  .more { width: 114px; height: 28px; background: #f0f0f0; border: 1px solid #fff; border-right-color: #696969; border-bottom-color: #696969; box-shadow: inset -1px -1px 0 #a0a0a0; display: flex; align-items: center; justify-content: center; gap: 11px; }
  .right { width: 192px; display: flex; flex-direction: column; }
  .so { display: flex; gap: 13px; padding-left: 19px; --w: 32px; } .so span { margin-top: 4px; }
  .n { margin: 8px 0 13px 2px; }
  .btns { display: flex; flex-direction: column; gap: 6px; margin: 18px 1px 0 auto; }
  .btns button { width: 112px; height: 26px; background: #fdfdfd; border: 1px solid #cdcdcd; border-bottom-color: #b4b4b4; border-radius: 4px; }
  .btns button:first-child { border-color: #1a6fb5; }
`, `
  <header><span class="logo"><b>A</b><i>CAD</i></span><h2>Array</h2><button aria-label="Close">${ic('dclose')}</button></header>
  <div class="body">
    <div class="left">
      <div class="radios"><label class="r"><input type="radio" name="k">Rectangular Array</label><label class="r"><input type="radio" name="k" checked>Polar Array</label></div>
      <div class="box">
        <div class="center"><span class="cp">Center point:</span><label class="x" for="cx">X:</label><input class="f" id="cx" value="7.0305"><label class="y" for="cy">Y:</label><input class="f" id="cy" value="0.8090"><pick-button label="Pick center"></pick-button></div>
        <fieldset><legend>Method and values</legend>
          <label class="ml" for="m">Method:</label>
          <div class="sel"><select id="m"><option>Total number of items &amp; Angle to fill</option></select>${ic('chev')}</div>
          <div class="vals">
            <label for="t">Total number of items:</label><input class="f on" id="t" value="5"><span></span>
            <label for="a">Angle to fill:</label><input class="f" id="a" value="360"><pick-button label="Pick angle"></pick-button>
            <label for="b">Angle between items:</label><input class="f" id="b" value="90" disabled><pick-button disabled label="Pick angle between"></pick-button>
          </div>
          <div class="tip"><div>${ic('tip')}<span>Tip</span></div><p>For angle to fill, a positive value specifies
counterclockwise rotation.  A negative value
specifies clockwise rotation.</p></div>
        </fieldset>
        <div class="foot"><label class="r"><input type="checkbox" checked>Rotate items as copied</label><button class="more"><span>M<u>o</u>re</span>${ic('more')}</button></div>
      </div>
    </div>
    <div class="right">
      <div class="so"><pick-button icon="pickobj" label="Select objects"></pick-button><span>Select objects</span></div>
      <div class="n">1 objects selected</div>
      <array-preview></array-preview>
      <div class="btns"><button>OK</button><button>Cancel</button><button>Preview &lt;</button><button>Help</button></div>
    </div>
  </div>`);

/* ---------- layout tabs and status bar ---------- */
define('layout-tabs', `
  :host { display: flex; align-items: center; height: 30px; padding-left: 13px; color: #dfe2e6; }
  button { display: flex; align-items: center; height: 30px; }
  .act { padding: 0 21px; background: #3b4453; clip-path: polygon(11px 0, 100% 0, calc(100% - 11px) 100%, 0 100%); font-weight: 700; color: #fff; margin-right: 10px; }
  .s { margin: 0 10px 0 11px; }
  .add { margin: 0 13px 0 31px; }
`, `<button class="act">Model</button><button>Layout1</button><cad-icon class="s" name="slash"></cad-icon><button>Layout2</button><button class="add" aria-label="New layout">${ic('plus')}</button>${ic('slash')}`);

const st = (n, o = '') => `<button aria-label="${n}" ${o}>${ic(n)}</button>`;
const sc = '<button class="c" aria-label="List"><cad-icon name="caretL"></cad-icon></button>';
define('status-bar', `
  :host { display: flex; height: 30px; margin: 7px 1px 0 5px; gap: 3px; color: #f1f2f4; }
  .s { display: flex; background: #3b4453; }
  .j { margin-right: -2px; }
  .sp { flex: 1; margin-right: 2px; }
  button { width: 30px; height: 30px; display: flex; align-items: center; justify-content: center; }
  .c { width: 20px; color: #e0e2e5; }
  .txt { width: auto; padding: 0 4px; gap: 5px; }
  .on { background: #6090c4; width: 28px; height: 28px; margin: 1px; }
  .wide { width: 34px; }
`, `
  <div class="s sp"></div>
  <div class="s"><button class="txt">MODEL</button></div>
  <div class="s">${st('grid')}${st('snap')}${sc}</div>
  <div class="s j">${st('dyn')}</div>
  <div class="s j">${st('ortho')}${st('polar')}${sc}${st('iso')}${sc}</div>
  <div class="s j">${st('track','class="on"')}${st('osnap','class="on"')}${sc}</div>
  <div class="s">${st('cube')}${sc}</div>
  <div class="s">${st('ann1','class="on"')}${st('ann2')}${st('ann3')}<button class="txt">1:1${ic('caretL')}</button></div>
  <div class="s j">${st('gear')}${sc}</div>
  <div class="s">${st('splus')}</div>
  <div class="s">${st('shapes')}</div>
  <div class="s">${st('globe','class="wide"')}${st('perf','class="wide"')}</div>
  <div class="s">${st('clean')}${st('menu')}</div>`);

define('cad-app', `
  :host { display: grid; grid-template-columns: 5px minmax(0, 1fr); height: 100vh; background: #212830; overflow: hidden; }
  .edge { background: linear-gradient(#1c1216, #3a2a28 50%, #2c1c20); border-right: 1px solid #2684b4; }
  .col { display: flex; flex-direction: column; min-width: 0; }
  .strip { height: 5px; margin-left: 3px; background: #3b4453; flex: none; }
  .work { flex: 1; display: grid; grid-template-columns: 34px minmax(0, 1fr) 30px; min-height: 0; }
  .lp { margin: 0 3px 0 4px; } .rp { margin-left: 4px; }
  .side { display: flex; flex-direction: column; }
  .cap { height: 3px; background: #3b4453; flex: none; }
  .side.l .cap { margin-left: 3px; }
  .side side-palette { flex: 1; margin-top: 4px; margin-bottom: 4px; }
`, `
  <div class="edge"></div>
  <div class="col">
    <title-bar></title-bar>
    <ribbon-tabs></ribbon-tabs>
    <cad-ribbon></cad-ribbon>
    <file-tabs></file-tabs>
    <div class="strip"></div>
    <div class="work">
      <div class="side l"><div class="cap"></div><side-palette class="lp" label="Layer Properties Manager"></side-palette><div class="cap"></div></div>
      <drawing-area></drawing-area>
      <div class="side"><div class="cap"></div><side-palette class="rp" label="Properties"></side-palette><div class="cap"></div></div>
    </div>
    <div class="strip"></div>
    <layout-tabs></layout-tabs>
    <status-bar></status-bar>
  </div>`);
</script>
</body>
</html>
